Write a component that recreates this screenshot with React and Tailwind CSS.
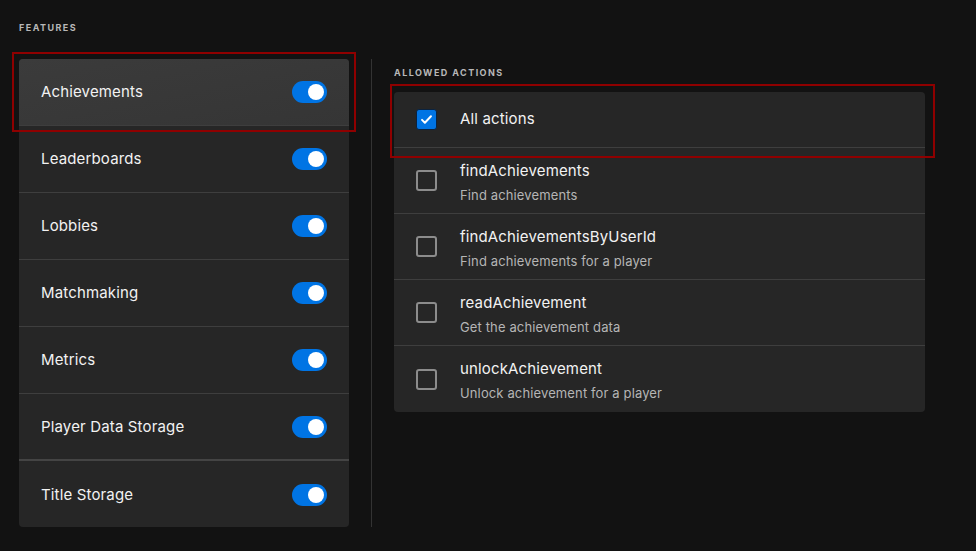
export default function App() {
  const features = [
    'Achievements',
    'Leaderboards',
    'Lobbies',
    'Matchmaking',
    'Metrics',
    'Player Data Storage',
    'Title Storage',
  ]
  const actions = [
    { name: 'findAchievements', desc: 'Find achievements' },
    { name: 'findAchievementsByUserId', desc: 'Find achievements for a player' },
    { name: 'readAchievement', desc: 'Get the achievement data' },
    { name: 'unlockAchievement', desc: 'Unlock achievement for a player' },
  ]

  return (
    <div
      className="w-[976px] h-[551px] bg-[#121212] text-[#f2f2f2] overflow-hidden pl-[19px]"
      style={{ fontFamily: 'Inter, "Noto Sans", sans-serif' }}
    >
      <div className="pt-[23px] text-[9px] font-bold tracking-[0.16em] text-[#b8b8b8] leading-[10px]">FEATURES</div>
      <div className="flex mt-[26px]">
        {/* Features list */}
        <div className="w-[330px] bg-[#262626] rounded-[4px] h-[468px]">
          {features.map((f, i) => (
            <div
              key={f}
              className={`relative h-[67px] flex items-center justify-between pl-[22px] pr-[22px] ${
                i === 0 ? 'bg-gradient-to-br from-[#3b3b3b] to-[#353535] rounded-t-[4px]' : ''
              } ${i < features.length - 1 ? (i === 5 ? 'border-b-2 border-[#444]' : 'border-b border-[#3e3e3e]') : ''}`}
            >
              <span className="text-[15px] tracking-[0.01em] pt-px">{f}</span>
              <div className="w-[35px] h-[22px] rounded-full bg-[#0074e4] flex items-center justify-end pr-[3px]">
                <div className="w-[16px] h-[16px] rounded-full bg-white" />
              </div>
              {i === 0 && (
                <div className="absolute -left-[7px] -right-[7px] -top-[7px] -bottom-[7px] border-2 border-[#8f0000] pointer-events-none" />
              )}
            </div>
          ))}
        </div>

        {/* Divider */}
        <div className="ml-[22px] w-px h-[468px] bg-[#333]" />

        {/* Allowed actions */}
        <div className="ml-[22px] w-[531px]">
          <div className="mt-[9px] text-[9px] font-bold tracking-[0.16em] text-[#b8b8b8] leading-[10px]">ALLOWED ACTIONS</div>
          <div className="mt-[14px] bg-[#262626] rounded-[4px]">
            <div className="relative h-[56px] flex items-center border-b border-[#3e3e3e] pl-[22px]">
              <div className="w-[21px] h-[21px] rounded-[3px] bg-[#0074e4] border border-[#0a2340] flex items-center justify-center">
                <svg width="13" height="13" viewBox="0 0 16 16" fill="none">
                  <path d="M2.5 8.5l3.5 3.5 7.5-8" stroke="white" strokeWidth="2.4" strokeLinecap="round" strokeLinejoin="round" />
                </svg>
              </div>
              <span className="ml-[23px] text-[15px] tracking-[0.01em]">All actions</span>
              <div className="absolute -left-[4px] -right-[10px] -top-[8px] -bottom-[11px] border-2 border-[#8f0000] pointer-events-none" />
            </div>
            {actions.map((a, i) => (
              <div
                key={a.name}
                className={`h-[66px] flex items-center pl-[22px] ${i < actions.length - 1 ? 'border-b border-[#3e3e3e]' : ''}`}
              >
                <div className="w-[21px] h-[21px] rounded-[3px] border-2 border-[#8c8c8c]" />
                <div className="ml-[23px] flex flex-col pt-[3px]">
                  <span className="text-[15px] leading-[20px] tracking-[0.01em]">{a.name}</span>
                  <span className="mt-[5px] text-[13px] leading-[18px] tracking-[0.01em] text-[#b5b5b5]">{a.desc}</span>
                </div>
              </div>
            ))}
          </div>
        </div>
      </div>
    </div>
  )
}
